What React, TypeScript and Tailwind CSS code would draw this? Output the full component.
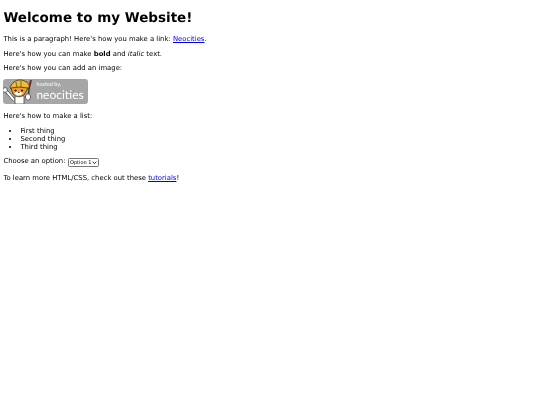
const badgeFont = "font-['Lato',sans-serif]";

export default function App() {
  return (
    <div className="min-h-[405px] bg-white px-[3.4px] pt-[11px] text-[6.85px] leading-[7.87px] text-black font-['DejaVu_Sans',sans-serif] [text-rendering:geometricPrecision] blur-[0.3px]">
      <h1 className="text-[13.5px] leading-[15.7px] font-bold">Welcome to my Website!</h1>
      <p className="mt-[9px]">This is a paragraph! Here's how you make a link: <a className="text-[#0000ee] underline" href="#">Neocities</a>.</p>
      <p className="mt-[7px]">Here's how you can make <b>bold</b> and <i>italic</i> text.</p>
      <p className="mt-[7px]">Here's how you can add an image:</p>
      <div className="mt-[6px] w-[85px] h-[25px] rounded-[3px] bg-[#a6a6a6] flex items-center">
        <svg viewBox="0 0 33 25" className="w-[33px] h-[25px] shrink-0">
          <path d="M1 10 L5 14 L11 21" stroke="#333" strokeWidth="3.2" fill="none" />
          <path d="M1 10 L5 14 L11 21" stroke="#fff" strokeWidth="2" fill="none" />
          <circle cx="2" cy="11" r="2.4" fill="#fff" stroke="#333" strokeWidth="0.7" />
          <path d="M12 17 Q16 15 21 17 L21 25 L12 25 Z" fill="#fff" stroke="#333" strokeWidth="0.7" />
          <path d="M7 8 Q11 0 19 1 Q25 2 27 7 L25 10 L8 10 Z" fill="#f0bb30" stroke="#3a3020" strokeWidth="0.8" />
          <path d="M13 3 L14 9 M18 2 L18 9" stroke="#6d5a1e" strokeWidth="0.8" />
          <path d="M8 9 L10 15 Q15 20 21 16 L25 9 Q16 7 8 9Z" fill="#f29c36" stroke="#3a3020" strokeWidth="0.8" />
          <path d="M11 14 Q15 19 20 14 Q16 12 11 14Z" fill="#fff" />
          <circle cx="12.5" cy="11.5" r="1.1" fill="#222" />
          <circle cx="19" cy="11.5" r="1.1" fill="#222" />
          <path d="M15 13.5 L16.5 13.5" stroke="#222" strokeWidth="0.9" />
          <path d="M28 1 L26.5 7" stroke="#7d2b2b" strokeWidth="2" />
          <path d="M26.5 7 L25.5 15" stroke="#3a3020" strokeWidth="1.4" />
          <ellipse cx="25" cy="18" rx="2.6" ry="3.2" fill="#fff" stroke="#333" strokeWidth="0.7" />
        </svg>
        <div className="text-white flex flex-col gap-[1px] -mt-[1px]">
          <span className={`text-[5.5px] leading-[6px] ${badgeFont}`}>hosted by,</span>
          <span className={`text-[12px] leading-[11px] ${badgeFont}`}>neocities</span>
        </div>
      </div>
      <p className="mt-[9px]">Here's how to make a list:</p>
      <ul className="mt-[6.75px] pl-[17px] list-disc">
        <li>First thing</li>
        <li>Second thing</li>
        <li>Third thing</li>
      </ul>
      <div className="mt-[6px] flex items-center gap-[2px]">
        <span>Choose an option:</span>
        <span className="relative block w-[31px] h-[9px]">
          <select className="appearance-none block w-full h-full border border-[#767676] rounded-[1.5px] pl-[1.5px] pr-0 py-0 text-[5px] leading-[7px] bg-white text-black">
            <option>Option 1</option>
          </select>
          <svg viewBox="0 0 6 4" className="absolute right-[1.5px] top-[3px] w-[5px] h-[3.5px] pointer-events-none">
            <path d="M0.7 0.7 L3 3 L5.3 0.7" fill="none" stroke="#111" strokeWidth="1.1" />
          </svg>
        </span>
      </div>
      <p className="mt-[8px]">To learn more HTML/CSS, check out these <a className="text-[#0000ee] underline" href="#">tutorials</a>!</p>
    </div>
  );
}
